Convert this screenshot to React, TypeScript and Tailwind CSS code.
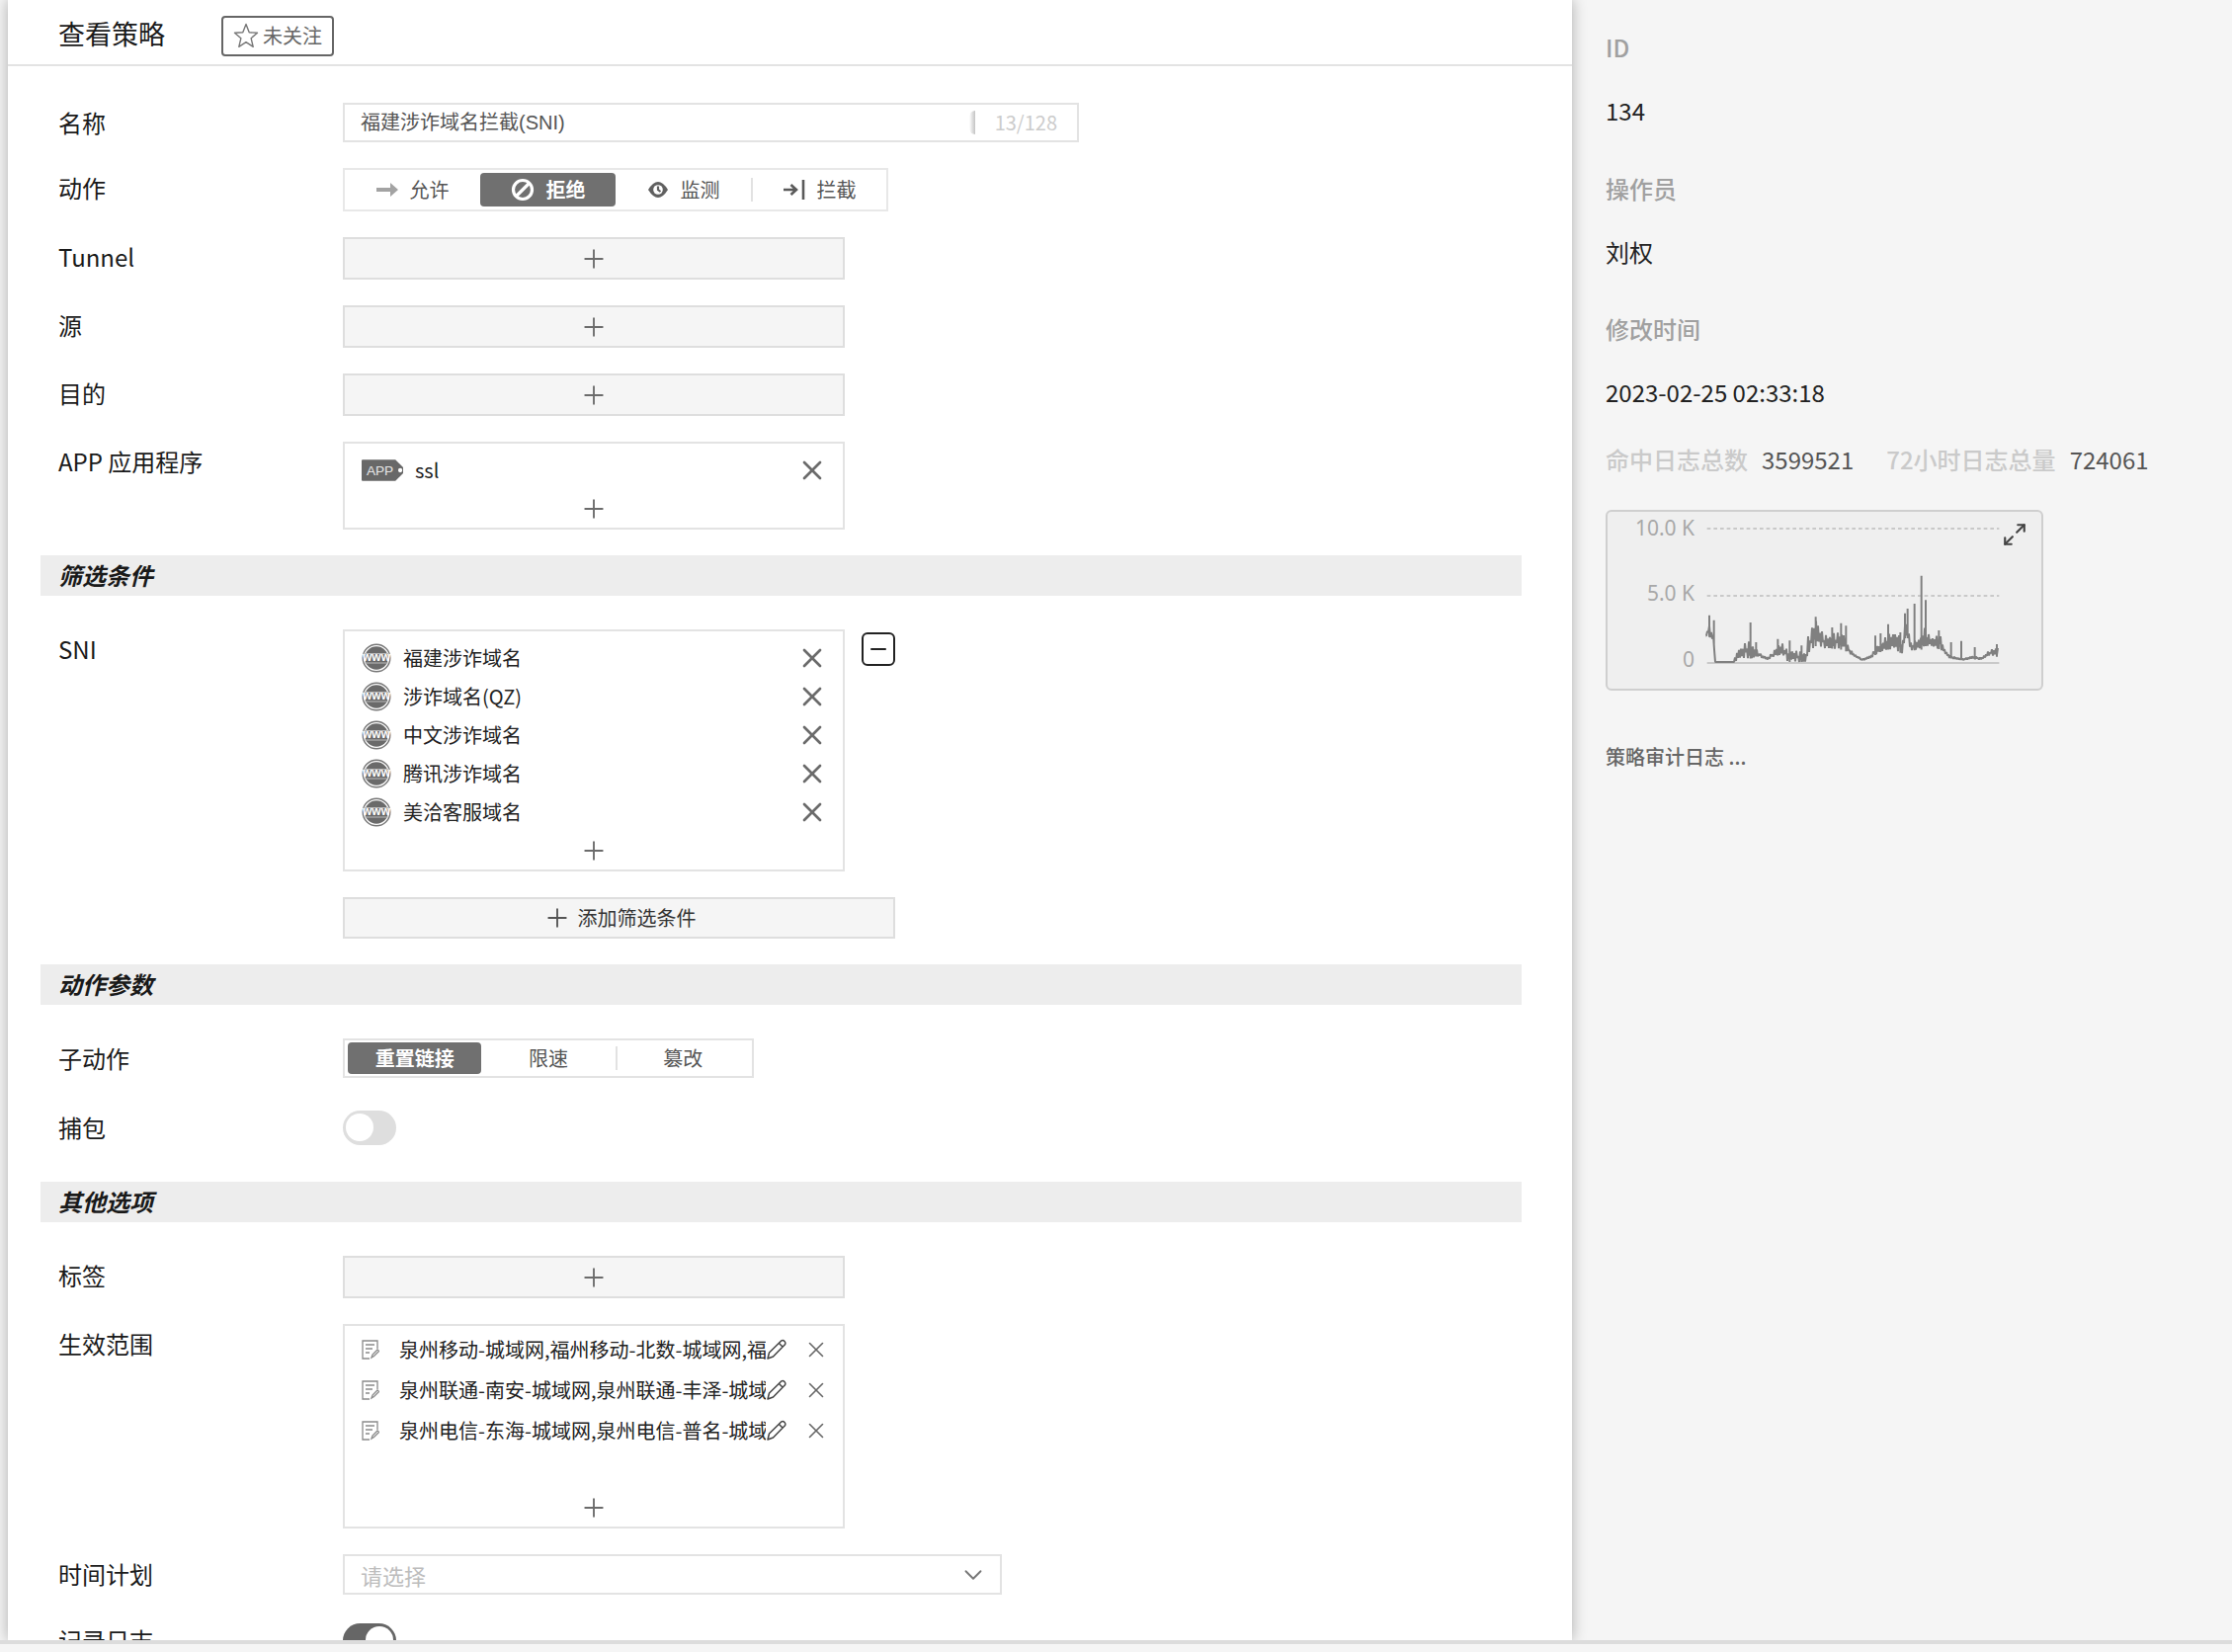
import React, { useState } from 'react';
import { ChevronDown, Maximize2, Minus, Plus, X } from 'lucide-react';

const SNI_ITEMS = ['福建涉诈域名', '涉诈域名(QZ)', '中文涉诈域名', '腾讯涉诈域名', '美洽客服域名'];

const SCOPE_ITEMS = [
  '泉州移动-城域网,福州移动-北数-城域网,福',
  '泉州联通-南安-城域网,泉州联通-丰泽-城域',
  '泉州电信-东海-城域网,泉州电信-普名-城域',
];

// x, upper edge, lower edge of the log volume curve
const BAND: number[][] = [
  [380, 415, 430], [388, 395, 432], [396, 415, 440], [404, 430, 460], [407, 510, 510], [465, 510, 510],
  [472, 478, 508], [490, 466, 502], [505, 442, 498], [520, 446, 500], [535, 472, 492], [550, 490, 498],
  [567, 496, 505], [585, 478, 494], [600, 448, 490], [615, 452, 490], [628, 478, 510], [685, 474, 510],
  [690, 428, 482], [705, 400, 472], [713, 380, 462], [725, 410, 466], [740, 426, 468], [770, 418, 470],
  [800, 428, 474], [808, 455, 480], [825, 480, 490], [855, 501, 506], [880, 490, 500], [900, 460, 484],
  [930, 425, 472], [960, 424, 480], [978, 440, 484], [985, 370, 430], [994, 390, 440], [1000, 450, 474],
  [1030, 440, 476], [1045, 404, 462], [1060, 430, 460], [1090, 426, 472], [1105, 474, 486], [1120, 490, 499],
  [1160, 500, 504], [1190, 492, 501], [1215, 496, 503], [1240, 474, 490], [1267, 466, 495],
];

const SPIKES: number[][] = [
  [390, 368], [404, 383], [515, 390], [532, 450], [598, 440], [634, 445], [670, 460], [713, 373], [763, 405],
  [790, 392], [805, 400], [894, 430], [910, 423], [933, 395], [970, 420], [984, 362], [992, 348], [1013, 333],
  [1034, 248], [1047, 322], [1087, 414], [1124, 450], [1155, 446], [1196, 465], [1263, 456],
];

const bandAt = (x: number) => {
  const i = Math.max(1, BAND.findIndex((b) => b[0] >= x));
  const [x0, t0, b0] = BAND[i - 1];
  const [x1, t1, b1] = BAND[i];
  const k = (x - x0) / (x1 - x0);
  return [t0 + (t1 - t0) * k, b0 + (b1 - b0) * k];
};

const buildCurve = () => {
  let d = 'M380 430';
  for (let x = 381, n = 0; x < 1267; x += 3, n++) {
    const [top, bottom] = bandAt(x);
    const wobble = ((n * n * 7 + n * 5) % 13) / 13;
    const y = n % 2 ? top + (bottom - top) * wobble * 0.5 : bottom - (bottom - top) * wobble * 0.4;
    d += `L${x} ${y.toFixed(1)}`;
  }
  SPIKES.forEach(([x, y]) => {
    d += `M${x} ${bandAt(x)[1].toFixed(1)}V${y}`;
  });
  return d;
};

const CURVE = buildCurve();

const StarIcon = () => (
  <svg width="26" height="26" viewBox="0 0 26 26" fill="none" stroke="#777" strokeWidth="1.4" strokeLinejoin="round">
    <path d="M13 1.5l3.2 8.2 8.3.6-6.4 5.4 2.1 8.6L13 19.6l-7.2 4.7 2.1-8.6-6.4-5.4 8.3-.6z" />
  </svg>
);

const AllowIcon = () => (
  <svg width="22" height="22" viewBox="0 0 22 22" fill="#a3a3a3">
    <path d="M0 9h14V4L22 11l-8 7V13H0z" />
  </svg>
);

const DenyIcon = () => (
  <svg width="24" height="24" viewBox="0 0 24 24" fill="none" stroke="#fff" strokeWidth="3.2">
    <circle cx="12" cy="12" r="9.5" />
    <path d="M18.5 5.500l-13 13" />
  </svg>
);

const WatchIcon = () => (
  <svg width="22" height="22" viewBox="0 0 22 22" fill="none">
    <path d="M1 11Q6 3 11 3t10 8q-5 8-10 8T1 11z" fill="#606060" />
    <circle cx="11" cy="11" r="4.8" fill="#fff" />
    <path d="M11 7.500V11l2.500 2" stroke="#606060" strokeWidth="2.2" />
  </svg>
);

const InterceptIcon = () => (
  <svg width="22" height="22" viewBox="0 0 22 22" fill="none" stroke="#5a5a5a" strokeWidth="2.6">
    <path d="M0 11h12M7.500 6l5.500 5-5.500 5M20 1v20" />
  </svg>
);

const AppTag = () => (
  <svg width="42" height="22" viewBox="0 0 43 22">
    <path d="M1 0h34l8 8v6l-8 8H1q-1 0-1-1V1q0-1 1-1z" fill="#686868" />
    <circle cx="40" cy="11" r="2.2" fill="#fff" />
    <text x="5" y="16" fontSize="14" fill="#e6e6e6" fontFamily="Liberation Sans, sans-serif">APP</text>
  </svg>
);

const GlobeIcon = () => (
  <svg width="30" height="30" viewBox="0 0 30 30">
    <circle cx="15" cy="15" r="13.8" fill="#fff" stroke="#777" strokeWidth="1.4" />
    <circle cx="15" cy="15" r="11.8" fill="#6a6a6a" />
    <path d="M2 10.500h26M3 20h24" stroke="#bbb" strokeWidth="1" />
    <text x="15" y="18" textAnchor="middle" fontSize="12" fontWeight="700" fill="#fff" fontFamily="Liberation Sans, sans-serif">www</text>
  </svg>
);

const NoteIcon = () => (
  <svg width="18" height="20" viewBox="0 0 18 20" fill="none" stroke="#8a8a8a" strokeWidth="1.3">
    <path d="M8 19H1V1h15v8M4 5h9M4 9h7M4 13h4M10 18l1-3 5-5 1.5 1.5-5 5z" />
  </svg>
);

const PencilIcon = () => (
  <svg width="22" height="22" viewBox="0 0 22 22" fill="none" stroke="#444" strokeWidth="1.5" strokeLinejoin="round">
    <path d="M2 20l1.500-6L16 1.800q1.500-.8 3 .7t.7 3L7.500 18zM13.500 4.500L17 8" />
  </svg>
);

interface RowProps {
  label: string;
  htmlFor?: string;
  className?: string;
  children: React.ReactNode;
}

const Row: React.FC<RowProps> = ({ label, htmlFor, className = 'items-start', children }) => (
  <div className={`flex ${className}`}>
    <label htmlFor={htmlFor} className="w-[288px] shrink-0 text-2xl leading-10 text-[#1a1a1a]">{label}</label>
    {children}
  </div>
);

const Section: React.FC<{ title: string; className?: string; children: React.ReactNode }> = ({ title, className = '', children }) => (
  <section>
    <h2 className="ml-[33px] mr-[51px] h-[41px] bg-[#ededed] pl-[18px] text-2xl leading-10 font-bold italic text-[#1a1a1a]">{title}</h2>
    <div className={`flex flex-col gap-[26px] pl-[51px] pt-[34px] ${className}`}>{children}</div>
  </section>
);

const AddBox = ({ label }: { label: string }) => (
  <button aria-label={`添加${label}`} className="flex h-[43px] w-[508px] items-center justify-center border-2 border-[#dedede] bg-[#f5f5f5]">
    <Plus size={30} strokeWidth={1.5} className="text-[#6b6b6b]" />
  </button>
);

const AddLine = ({ label }: { label: string }) => (
  <button aria-label={`添加${label}`} className="mt-auto flex h-[39px] w-full items-center justify-center">
    <Plus size={30} strokeWidth={1.5} className="text-[#6b6b6b]" />
  </button>
);

const ListItem = ({ icon, text }: { icon: React.ReactNode; text: string }) => (
  <li className="flex h-[39px] items-center pl-[17px] pr-[15px]">
    {icon}
    <span className="ml-3 flex-1 text-xl text-[#222]">{text}</span>
    <button aria-label={`删除 ${text}`}>
      <X size={32} strokeWidth={2} className="text-[#6b6b6b]" />
    </button>
  </li>
);

interface SegmentProps {
  active: boolean;
  divider?: boolean;
  onClick: () => void;
  children: React.ReactNode;
}

const Segment: React.FC<SegmentProps> = ({ active, divider, onClick, children }) => (
  <button
    aria-pressed={active}
    onClick={onClick}
    className={`flex h-full flex-1 items-center justify-center gap-3 text-xl ${
      active ? 'rounded bg-[#707070] font-bold text-white' : 'text-[#555]'
    }`}
  >
    {divider && <span className="mr-auto h-6 w-0.5 bg-[#e2e2e2]" />}
    {children}
    {divider && <span className="ml-auto" />}
  </button>
);

const Toggle = ({ id, defaultChecked = false }: { id: string; defaultChecked?: boolean }) => (
  <input
    id={id}
    type="checkbox"
    role="switch"
    defaultChecked={defaultChecked}
    className="flex h-[35px] w-[54px] appearance-none items-center rounded-full bg-[#dedede] px-[3px] before:size-7 before:rounded-full before:bg-white checked:justify-end checked:bg-[#666]"
  />
);

const ACTIONS = [
  { name: '允许', icon: <AllowIcon /> },
  { name: '拒绝', icon: <DenyIcon /> },
  { name: '监测', icon: <WatchIcon /> },
  { name: '拦截', icon: <InterceptIcon />, divider: true },
];

const SUB_ACTIONS = [{ name: '重置链接' }, { name: '限速' }, { name: '篡改', divider: true }];

const PolicyForm = () => {
  const [name, setName] = useState('福建涉诈域名拦截(SNI)');
  const [action, setAction] = useState('拒绝');
  const [subAction, setSubAction] = useState('重置链接');

  return (
    <main className="z-10 ml-2 min-w-0 flex-1 bg-white shadow-[0_0_14px_rgba(0,0,0,0.3)]">
      <header className="flex h-[67px] items-center border-b-2 border-[#e3e3e3] pl-[51px] pt-[7px]">
        <h1 className="w-[165px] pb-1 text-[27px] leading-10 text-[#1a1a1a]">查看策略</h1>
        <button className="flex h-[41px] w-[114px] items-center justify-center gap-1 rounded border-2 border-[#666] text-xl text-[#666]">
          <StarIcon />
          未关注
        </button>
      </header>

      <div className="flex flex-col gap-[26px] pl-[51px] pt-[37px] pb-[26px]">
        <Row label="名称" htmlFor="policy-name">
          <div className="flex h-10 w-[745px] items-center border-2 border-[#e3e3e3] pl-4 pr-5">
            <input
              id="policy-name"
              value={name}
              onChange={(e) => setName(e.target.value)}
              className="min-w-0 flex-1 bg-transparent font-['Liberation_Sans','Noto_Sans_CJK_SC',sans-serif] text-xl text-[#555] outline-none"
            />
            <span className="mr-5 h-6 w-1.5 rounded-l-full bg-linear-to-r from-white to-[#c4c4c4]" />
            <span className="text-xl text-[#ccc]">{name.length}/128</span>
          </div>
        </Row>
        <Row label="动作">
          <div className="flex h-[44px] w-[552px] border-2 border-[#e8e8e8] py-[3px]">
            {ACTIONS.map((a) => (
              <Segment key={a.name} active={action === a.name} divider={a.divider} onClick={() => setAction(a.name)}>
                {a.icon}
                {a.name}
              </Segment>
            ))}
          </div>
        </Row>
        {['Tunnel', '源', '目的'].map((label) => (
          <Row key={label} label={label}>
            <AddBox label={label} />
          </Row>
        ))}
        <Row label="APP 应用程序">
          <div className="w-[508px] border-2 border-[#e3e3e3] pt-[7px]">
            <ul>
              <ListItem icon={<AppTag />} text="ssl" />
            </ul>
            <AddLine label="应用程序" />
          </div>
        </Row>
      </div>

      <Section title="筛选条件" className="pb-[26px]">
        <Row label="SNI">
          <div className="w-[508px] border-2 border-[#e3e3e3] pt-[7px]">
            <ul>
              {SNI_ITEMS.map((item) => (
                <ListItem key={item} icon={<GlobeIcon />} text={item} />
              ))}
            </ul>
            <AddLine label="SNI" />
          </div>
          <button aria-label="移除条件" className="ml-[17px] mt-[3px] flex size-[34px] items-center justify-center rounded-md border-2 border-[#222]">
            <Minus size={24} strokeWidth={2} className="text-[#222]" />
          </button>
        </Row>
        <button className="ml-[288px] flex h-[42px] w-[559px] items-center justify-center gap-1.5 border-2 border-[#dedede] bg-[#f5f5f5] text-xl text-[#333]">
          <Plus size={30} strokeWidth={1.5} className="text-[#555]" />
          添加筛选条件
        </button>
      </Section>

      <Section title="动作参数" className="pb-[31px]">
        <Row label="子动作">
          <div className="flex h-10 w-[416px] border-2 border-[#e3e3e3] px-[3px] py-0.5">
            {SUB_ACTIONS.map((a) => (
              <Segment key={a.name} active={subAction === a.name} divider={a.divider} onClick={() => setSubAction(a.name)}>
                {a.name}
              </Segment>
            ))}
          </div>
        </Row>
        <Row label="捕包" htmlFor="capture" className="h-12 items-center">
          <Toggle id="capture" />
        </Row>
      </Section>

      <Section title="其他选项">
        <Row label="标签">
          <AddBox label="标签" />
        </Row>
        <Row label="生效范围" className="items-start">
          <div className="flex h-[207px] w-[508px] flex-col border-2 border-[#e3e3e3] pt-[3px]">
            <ul>
              {SCOPE_ITEMS.map((item) => (
                <li key={item} className="flex h-[41px] items-center pl-[17px] pr-[14px]">
                  <NoteIcon />
                  <span className="ml-5 w-[371px] overflow-hidden text-xl whitespace-nowrap text-[#222]">{item}</span>
                  <button aria-label="编辑">
                    <PencilIcon />
                  </button>
                  <button aria-label="删除" className="ml-auto">
                    <X size={26} strokeWidth={1.5} className="text-[#666]" />
                  </button>
                </li>
              ))}
            </ul>
            <AddLine label="生效范围" />
          </div>
        </Row>
        <Row label="时间计划" htmlFor="schedule">
          <div className="relative">
            <select id="schedule" className="h-[41px] w-[667px] appearance-none border-2 border-[#e3e3e3] bg-white pl-4 text-[22px] leading-8 text-[#bdbdbd]">
              <option>请选择</option>
            </select>
            <ChevronDown size={30} strokeWidth={1.5} className="pointer-events-none absolute right-3.5 top-1.5 text-[#777]" />
          </div>
        </Row>
        <Row label="记录日志" htmlFor="record" className="items-center">
          <Toggle id="record" defaultChecked />
        </Row>
      </Section>
    </main>
  );
};

const InfoPanel = () => (
  <aside className="w-[668px] shrink-0 pl-[34px] pt-[30px] text-2xl leading-9">
    <dl className="text-[#222]">
      <dt className="font-medium text-[#a0a0a0]">ID</dt>
      <dd className="mt-7 mb-[43px]">134</dd>
      <dt className="font-medium text-[#a0a0a0]">操作员</dt>
      <dd className="mt-7 mb-[42px]">刘权</dd>
      <dt className="font-medium text-[#a0a0a0]">修改时间</dt>
      <dd className="mt-7 mb-8">2023-02-25 02:33:18</dd>
    </dl>
    <dl className="flex text-[#555]">
      <dt className="font-medium text-[#cacaca]">命中日志总数</dt>
      <dd className="ml-3.5 mr-[33px]">3599521</dd>
      <dt className="font-medium text-[#cacaca]">72小时日志总量</dt>
      <dd className="ml-3.5">724061</dd>
    </dl>
    <div className="relative mt-[33px] w-[443px] overflow-hidden rounded-md border-2 border-[#cfcfcf] bg-[#efefef]">
      <svg viewBox="81 54 1317 537" className="block h-[179px] w-full" fill="none">
        <g fill="#a8a8a8" fontSize="63" textAnchor="end" fontFamily="Noto Sans, sans-serif">
          <text x="345" y="126">10.0 K</text>
          <text x="345" y="324">5.0 K</text>
          <text x="345" y="526">0</text>
        </g>
        <path d="M383 105H1270M383 309H1270" stroke="#bdbdbd" strokeWidth="4" strokeDasharray="11 9" />
        <path d="M383 513H1270" stroke="#bdbdbd" strokeWidth="4" />
        <path d={CURVE} stroke="#808080" strokeWidth="6" strokeLinejoin="bevel" />
      </svg>
      <button aria-label="放大" className="absolute right-3.5 top-2.5">
        <Maximize2 size={26} strokeWidth={2} className="text-[#444]" />
      </button>
    </div>
    <a href="#audit" className="mt-[49px] block text-xl leading-9 font-medium text-[#666]">策略审计日志 ...</a>
  </aside>
);

export default function App() {
  return (
    <div className="flex h-screen flex-col overflow-hidden bg-[#f5f5f5] font-['Noto_Sans_CJK_SC',sans-serif]">
      <div className="flex min-h-0 flex-1 overflow-hidden">
        <PolicyForm />
        <InfoPanel />
      </div>
      <footer className="z-20 h-3 shrink-0 border-t-4 border-[#dcdcdc] bg-[#f5f5f5]" />
    </div>
  );
}
